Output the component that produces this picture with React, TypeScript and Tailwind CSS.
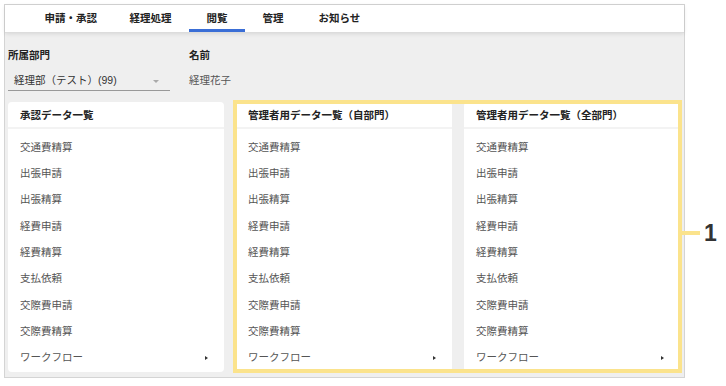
const tabs = ['申請・承認', '経理処理', '閲覧', '管理', 'お知らせ'];

const items = [
  '交通費精算',
  '出張申請',
  '出張精算',
  '経費申請',
  '経費精算',
  '支払依頼',
  '交際費申請',
  '交際費精算',
];

const panels = ['承認データ一覧', '管理者用データ一覧（自部門）', '管理者用データ一覧（全部門）'];

function Panel({ title }: { title: string }) {
  return (
    <div className="bg-white rounded-[4px] h-[270px] flex flex-col overflow-hidden">
      <div className="h-[27px] flex items-center pt-[3px] px-3 border-b-2 border-[#f3f3f3] text-[10.5px] font-bold text-[#222]">
        {title}
      </div>
      <ul className="pt-[5.5px]">
        {items.map((item) => (
          <li key={item} className="h-[26.3px] flex items-center px-3 text-[10.5px] text-[#555]">
            {item}
          </li>
        ))}
        <li className="h-[26.3px] flex items-center justify-between pl-3 pr-[16px] text-[10.5px] text-[#555]">
          <span>ワークフロー</span>
          <span className="w-0 h-0 border-y-[2.5px] border-y-transparent border-l-[3px] border-l-[#333]" />
        </li>
      </ul>
    </div>
  );
}

export default function App() {
  return (
    <div
      className="relative w-[726px] h-[386px] bg-white pt-[4px] pl-[4px]"
      style={{ fontFamily: '"Liberation Sans", "Noto Sans CJK JP", sans-serif' }}
    >
      <div className="w-[681px] h-[374px] border border-[#d4d4d4] bg-[#efefef] flex flex-col">
        {/* Tabs */}
        <div className="relative z-10 h-[28px] bg-white border-b border-[#dcdcdc] shadow-[0_1px_4px_rgba(0,0,0,0.10)] flex pl-[22px]">
          {tabs.map((t, i) => (
            <div
              key={t}
              className={
                t === '閲覧'
                  ? 'px-[17.5px] h-full flex items-center text-[10.5px] font-bold text-[#222] border-b-[3px] border-[#3a6ed6] pt-[3px]'
                  : i === 0
                    ? 'pl-[17.5px] pr-[15px] h-full flex items-center text-[10.5px] font-bold text-[#222]'
                    : 'px-[17.5px] h-full flex items-center text-[10.5px] font-bold text-[#222]'
              }
            >
              {t}
            </div>
          ))}
        </div>

        <div className="px-[3px] pt-[15px]">
          {/* Form */}
          <div className="flex gap-[19px]">
            <div className="w-[162px]">
              <div className="text-[10.5px] font-bold text-[#222] h-[16px] flex items-center">所属部門</div>
              <div className="mt-[8px] h-[19px] border-b border-[#999] flex items-center justify-between pl-[6px] pr-[11px]">
                <span className="text-[10.5px] text-[#333]">経理部（テスト）(99)</span>
                <span className="w-0 h-0 border-x-[3px] border-x-transparent border-t-[3px] border-t-[#aaa]" />
              </div>
            </div>
            <div>
              <div className="text-[10.5px] font-bold text-[#222] h-[16px] flex items-center">名前</div>
              <div className="mt-[8px] h-[18px] flex items-center text-[10.5px] text-[#555]">経理花子</div>
            </div>
          </div>

          {/* Panels */}
          <div className="relative mt-[11px] grid grid-cols-[216px_216px_216px] gap-[12px]">
            {panels.map((p) => (
              <Panel key={p} title={p} />
            ))}
            <div className="absolute top-[-2px] bottom-[-1px] left-[225px] right-[-1px] border-4 border-[#fbe38c] pointer-events-none">
              <div className="absolute left-[calc(100%+4px)] top-[127px] w-[18px] h-[4px] bg-[#fbe38c]" />
              <div className="absolute left-[calc(100%+26px)] top-[118px] text-[23px] font-bold text-[#333] leading-none">
                1
              </div>
            </div>
          </div>
        </div>
      </div>
    </div>
  );
}
